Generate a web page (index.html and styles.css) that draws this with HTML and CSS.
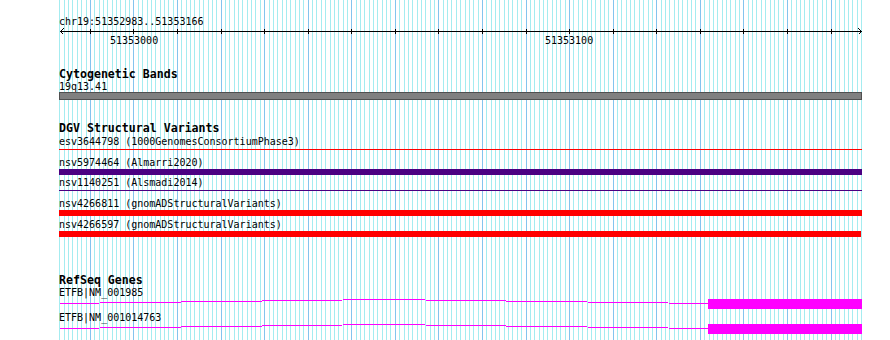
FILE: index.html
```html
<!DOCTYPE html>
<html>

<head>
    <title>chr19:51352983..51353166</title>
    <meta charset="utf-8">
    <link rel="stylesheet" href="styles.css">
</head>

<body>
    <div class="panel">
        <svg class="grid" id="grid" width="890" height="340"></svg>

        <div class="tracks">
            <div class="ruler">
                <div class="label">chr19:51352983..51353166</div>
                <svg class="axis" id="axis" width="890" height="7">
                    <rect x="60" y="3" width="802" height="1" />
                    <polyline points="63.5,0.5 60.5,3.5 63.5,6.5" />
                    <polyline points="858.5,0.5 861.5,3.5 858.5,6.5" />
                </svg>
                <div class="tick-labels">
                    <span class="tick-label" style="left: 51px">51353000</span>
                    <span class="tick-label" style="left: 486px">51353100</span>
                </div>
            </div>

            <div class="track cyto">
                <div class="track-title">Cytogenetic Bands</div>
                <div class="label">19q13.41</div>
                <div class="band"></div>
            </div>

            <div class="track dgv">
                <div class="track-title">DGV Structural Variants</div>
                <div class="feature">
                    <div class="label">esv3644798 (1000GenomesConsortiumPhase3)</div>
                    <div class="sv-line red"></div>
                </div>
                <div class="feature">
                    <div class="label">nsv5974464 (Almarri2020)</div>
                    <div class="sv-bar indigo"></div>
                </div>
                <div class="feature">
                    <div class="label">nsv1140251 (Alsmadi2014)</div>
                    <div class="sv-line indigo"></div>
                </div>
                <div class="feature">
                    <div class="label">nsv4266811 (gnomADStructuralVariants)</div>
                    <div class="sv-bar red"></div>
                </div>
                <div class="feature">
                    <div class="label">nsv4266597 (gnomADStructuralVariants)</div>
                    <div class="sv-bar red" style="width: 802px"></div>
                </div>
            </div>

            <div class="track genes">
                <div class="track-title">RefSeq Genes</div>
                <div class="transcript">
                    <div class="label">ETFB|NM_001985</div>
                    <svg class="gene" width="803" height="10">
                        <polyline points="1,4.5 325,0.5 649,4.5" />
                        <rect x="649" y="0" width="154" height="10" />
                    </svg>
                </div>
                <div class="transcript">
                    <div class="label">ETFB|NM_001014763</div>
                    <svg class="gene" width="803" height="10">
                        <polyline points="1,4.5 325,0.5 649,4.5" />
                        <rect x="649" y="0" width="154" height="10" />
                    </svg>
                </div>
            </div>
        </div>
    </div>

    <script>
        var start = 51352983;
        var end = 51353166;
        var left = 59.4;
        var scale = 4.3565;
        var ns = 'http://www.w3.org/2000/svg';

        function addRect(svg, x, y, w, h, cls) {
            var r = document.createElementNS(ns, 'rect');
            r.setAttribute('x', x);
            r.setAttribute('y', y);
            r.setAttribute('width', w);
            r.setAttribute('height', h);
            if (cls) {
                r.setAttribute('class', cls);
            }
            svg.appendChild(r);
        }

        var grid = document.getElementById('grid');
        var axis = document.getElementById('axis');

        for (var pos = start; pos <= end + 1; pos++) {
            var x = Math.round(left + (pos - start) * scale);
            var major = pos % 10 === 0;
            addRect(grid, x, 0, 1, 340, major ? 'major' : 'minor');
            if (major && pos <= end) {
                addRect(axis, x, 1, 1, 5);
            }
        }
    </script>
</body>

</html>
```

FILE: styles.css
```css
body {
    margin: 0;
    background-color: #fff;
    font-family: "DejaVu Sans Mono", "Liberation Mono", monospace;
    color: #000;
}

.panel {
    position: relative;
    width: 890px;
    height: 340px;
    overflow: hidden;
    background-color: #fff;
}

.grid {
    position: absolute;
    top: 0;
    left: 0;
    shape-rendering: crispEdges;
}

.grid .minor {
    fill: #a4ecf0;
}

.grid .major {
    fill: #84c4ee;
}

.tracks {
    position: relative;
    padding: 15px 0 0 59px;
    width: 803px;
}

.label {
    font-size: 10px;
    line-height: 13px;
    height: 13px;
    white-space: nowrap;
}

.track-title {
    font-size: 11.6px;
    font-weight: bold;
    line-height: 12px;
    height: 12px;
    white-space: nowrap;
}

/* ruler */

.axis {
    display: block;
    margin-left: -59px;
    overflow: visible;
    shape-rendering: crispEdges;
}

.axis rect {
    fill: #000;
}

.axis polyline {
    fill: none;
    stroke: #000;
    stroke-width: 1;
}

.tick-labels {
    position: relative;
    height: 11px;
}

.tick-label {
    position: absolute;
    top: 0;
    font-size: 10px;
    line-height: 11px;
}

/* tracks */

.cyto {
    margin-top: 22px;
}

.band {
    margin-top: -1px;
    height: 6px;
    background-color: #808080;
    border: 1px solid #505050;
}

.dgv {
    margin-top: 22px;
}

.dgv .track-title {
    margin-bottom: 1px;
}

.feature {
    height: 20.67px;
}

.sv-line {
    margin-top: 1px;
    height: 1px;
}

.sv-bar {
    height: 6px;
}

.red {
    background-color: #ff0000;
}

.indigo {
    background-color: #4b0082;
}

.genes {
    margin-top: 36px;
}

.transcript {
    height: 25px;
}

.gene {
    display: block;
    shape-rendering: crispEdges;
}

.gene polyline {
    fill: none;
    stroke: #ff00ff;
    stroke-width: 1;
}

.gene rect {
    fill: #ff00ff;
}
```
